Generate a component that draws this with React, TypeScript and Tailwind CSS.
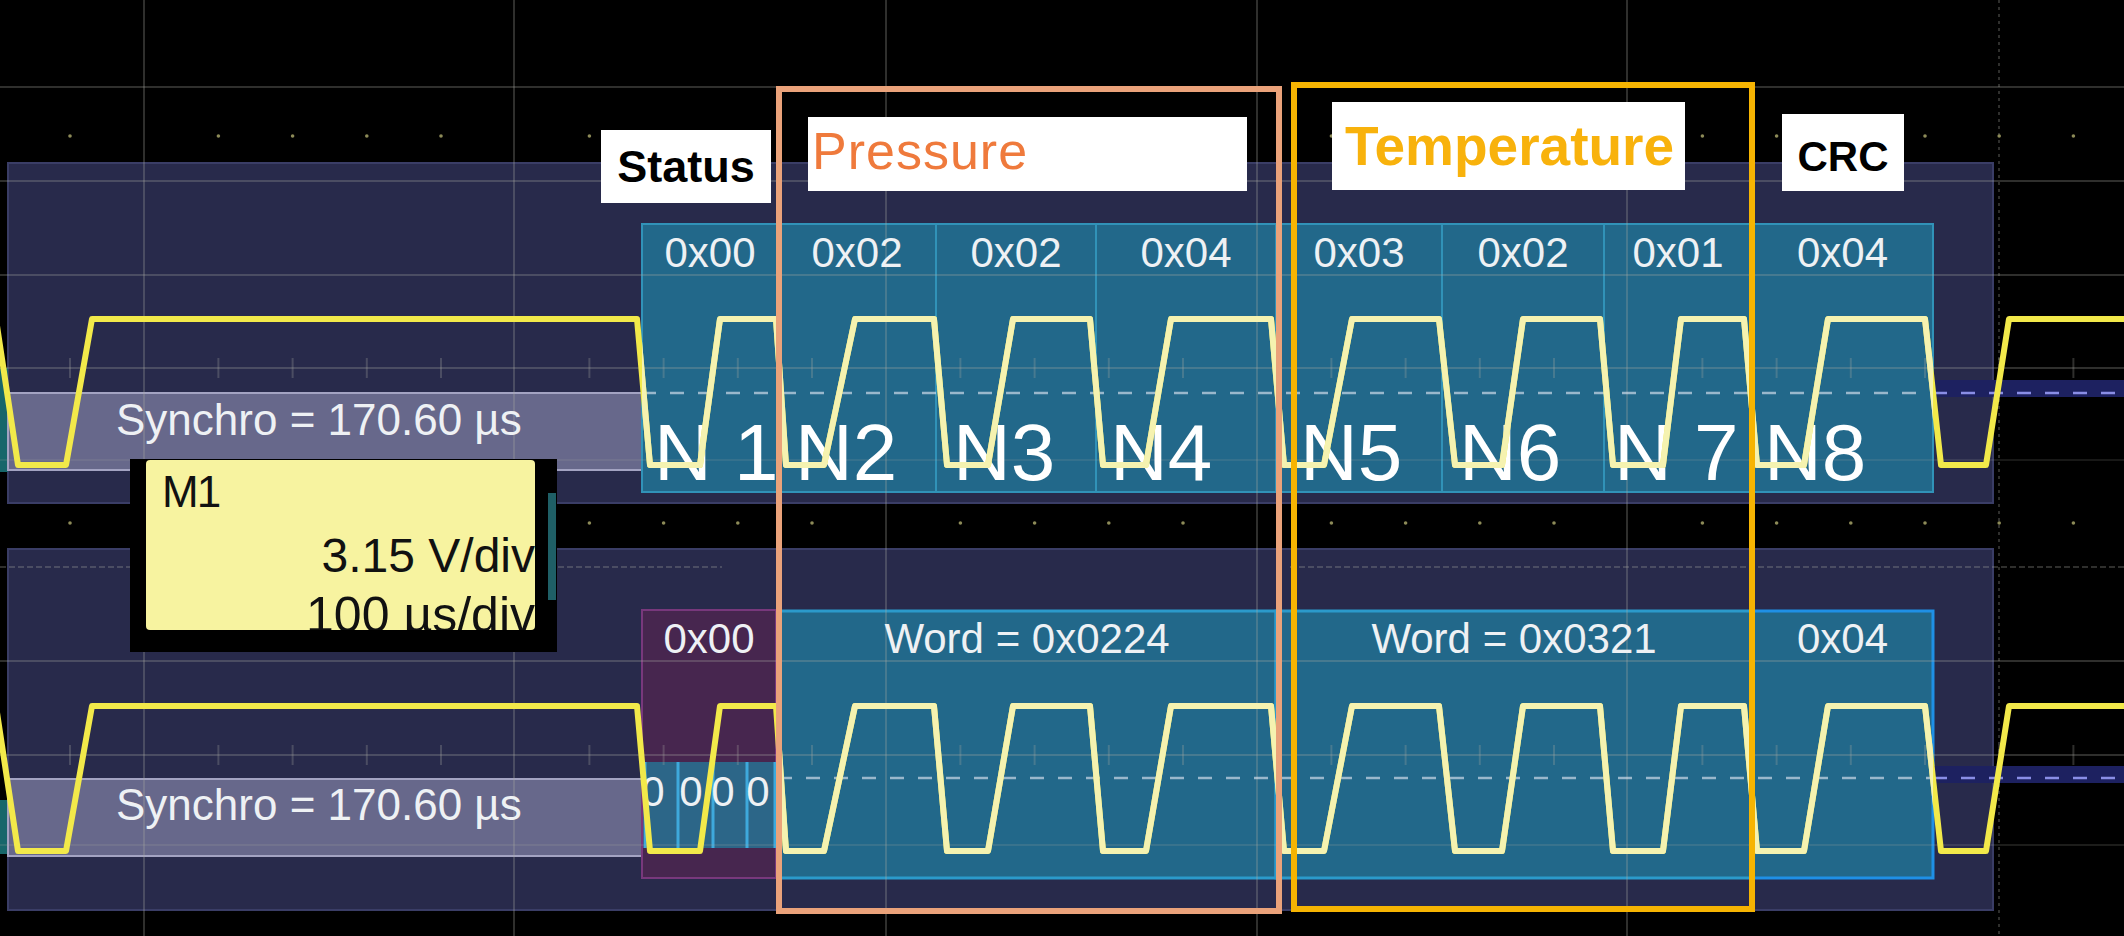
const FONT = "'Liberation Sans', Arial, sans-serif";

// signal levels for the two traces
const HI_T = 319;
const LO_T = 465;
const HI_B = 706;
const LO_B = 851;

// start/end x of every edge, both traces share the timing
const edges: [number, number][] = [
  [-4, 18], [66, 92], [637, 650], [700, 720], [776, 786], [824, 855],
  [934, 947], [988, 1013], [1090, 1103], [1146, 1171], [1271, 1284], [1324, 1352],
  [1439, 1455], [1502, 1523], [1600, 1613], [1663, 1681], [1744, 1757], [1804, 1828],
  [1925, 1941], [1986, 2009],
];

const wavePath = (hi: number, lo: number) => {
  let y = hi;
  let d = `M -8 ${hi}`;
  for (const [a, b] of edges) {
    const next = y === hi ? lo : hi;
    d += ` L ${a} ${y} L ${b} ${next}`;
    y = next;
  }
  return d + ` L 2132 ${y}`;
};

const topCells = [
  { x: 642, w: 136, hex: "0x00", n: "N 1", nx: 654 },
  { x: 778, w: 158, hex: "0x02", n: "N2", nx: 795 },
  { x: 936, w: 160, hex: "0x02", n: "N3", nx: 953 },
  { x: 1096, w: 180, hex: "0x04", n: "N4", nx: 1110 },
  { x: 1276, w: 166, hex: "0x03", n: "N5", nx: 1300 },
  { x: 1442, w: 162, hex: "0x02", n: "N6", nx: 1459 },
  { x: 1604, w: 148, hex: "0x01", n: "N 7", nx: 1614 },
  { x: 1752, w: 181, hex: "0x04", n: "N8", nx: 1764 },
];

const words = [
  { x: 778, w: 498, label: "Word = 0x0224", stroke: "#2b9acb" },
  { x: 1276, w: 476, label: "Word = 0x0321", stroke: "#2b9acb" },
  { x: 1752, w: 181, label: "0x04", stroke: "#1f90e6" },
];

const majorX = [144, 514, 886, 1257, 1627];
const minorX = Array.from({ length: 29 }, (_, i) => 70 + i * 74.2).filter(
  (x) => !majorX.some((m) => Math.abs(m - x) < 6)
);

const GRID = "rgba(170,170,160,0.28)";

function Scope() {
  return (
    <svg width={2124} height={936} viewBox="0 0 2124 936" className="block">
      <defs>
        <clipPath id="decodeTop">
          <rect x={642} y={224} width={1291} height={268} />
        </clipPath>
        <clipPath id="decodeBottom">
          <rect x={778} y={610} width={1155} height={268} />
        </clipPath>
        <clipPath id="smallCells">
          <rect x={645} y={762} width={130} height={86} />
        </clipPath>
      </defs>

      {/* panels */}
      <rect x={8} y={163} width={1985} height={340} fill="#282a4b" stroke="#3a3d66" strokeWidth={2} />
      <rect x={8} y={549} width={1985} height={361} fill="#282a4b" stroke="#3a3d66" strokeWidth={2} />

      {/* teal slivers on the left edge */}
      <rect x={0} y={368} width={8} height={104} fill="#17666a" />
      <rect x={0} y={800} width={8} height={54} fill="#17666a" />

      {/* synchro boxes */}
      <rect x={8} y={393} width={634} height={77} fill="#67688b" stroke="#a3a3c2" strokeWidth={2} />
      <rect x={8} y={779} width={634} height={77} fill="#67688b" stroke="#a3a3c2" strokeWidth={2} />

      {/* top decode cells */}
      {topCells.map((c) => (
        <rect key={c.x} x={c.x} y={224} width={c.w} height={268} fill="#22688a" stroke="#3192b8" strokeWidth={2} />
      ))}

      {/* bottom decode */}
      <rect x={642} y={610} width={134} height={268} fill="#47264f" stroke="#78387c" strokeWidth={2} />
      <rect x={645} y={762} width={130} height={86} fill="#2c6688" />
      {[645, 678, 713, 747, 775].map((x) => (
        <line key={x} x1={x} y1={762} x2={x} y2={848} stroke="#3ea9dc" strokeWidth={3} />
      ))}
      {words.map((w) => (
        <rect key={w.x} x={w.x} y={611} width={w.w} height={267} fill="#22688a" stroke={w.stroke} strokeWidth={3} />
      ))}

      {/* grid */}
      <g stroke={GRID} strokeWidth={2}>
        {majorX.map((x) => (
          <line key={x} x1={x} y1={0} x2={x} y2={936} />
        ))}
        <line x1={1999} y1={0} x2={1999} y2={936} strokeDasharray="3 4" />
        <line x1={0} y1={87} x2={776} y2={87} />
        <line x1={1755} y1={87} x2={2124} y2={87} />
        {[181, 275, 368, 661, 755].map((y) => (
          <line key={y} x1={0} y1={y} x2={2124} y2={y} />
        ))}
        <line x1={0} y1={460} x2={2124} y2={460} strokeOpacity={0.5} />
        <line x1={0} y1={845} x2={2124} y2={845} strokeOpacity={0.6} />
        <line x1={0} y1={567} x2={722} y2={567} strokeDasharray="6 3" />
        <line x1={1290} y1={567} x2={2124} y2={567} strokeDasharray="6 3" />
        {minorX.map((x) => (
          <g key={x}>
            <line x1={x} y1={358} x2={x} y2={378} />
            <line x1={x} y1={745} x2={x} y2={765} />
          </g>
        ))}
      </g>
      {minorX.map((x) => (
        <g key={x} fill="#8d8b58">
          <circle cx={x} cy={136} r={1.8} />
          <circle cx={x} cy={523} r={1.8} />
        </g>
      ))}

      {/* reference level bands and dashed lines */}
      <rect x={1933} y={380} width={191} height={17} fill="#1d2160" />
      <rect x={1933} y={766} width={191} height={17} fill="#1d2160" />
      <g strokeWidth={2.5} strokeDasharray="14 14">
        <line x1={642} y1={393} x2={1933} y2={393} stroke="rgba(220,228,240,0.65)" />
        <line x1={1933} y1={393} x2={2124} y2={393} stroke="#8a8ee6" />
        <line x1={778} y1={778} x2={1933} y2={778} stroke="rgba(220,228,240,0.65)" />
        <line x1={1933} y1={778} x2={2124} y2={778} stroke="#8a8ee6" />
      </g>

      {/* texts */}
      <g fontFamily={FONT} fill="#eef1f4">
        <text x={116} y={435} fontSize={44}>Synchro = 170.60 µs</text>
        <text x={116} y={820} fontSize={44}>Synchro = 170.60 µs</text>
        {topCells.map((c) => (
          <text key={c.x} x={c.x + c.w / 2} y={267} fontSize={42} textAnchor="middle">
            {c.hex}
          </text>
        ))}
        {topCells.map((c) => (
          <text key={c.x} x={c.nx} y={480} fontSize={80} fill="#ffffff">
            {c.n}
          </text>
        ))}
        <text x={709} y={653} fontSize={42} textAnchor="middle">0x00</text>
        {words.map((w) => (
          <text key={w.x} x={w.x + w.w / 2} y={653} fontSize={42} textAnchor="middle">
            {w.label}
          </text>
        ))}
        <g clipPath="url(#smallCells)" fontSize={42}>
          {[653, 691, 723, 758].map((x) => (
            <text key={x} x={x} y={806} textAnchor="middle">0</text>
          ))}
        </g>
      </g>

      {/* waveforms */}
      <g fill="none" strokeWidth={6} strokeLinejoin="round">
        <path d={wavePath(HI_T, LO_T)} stroke="#f2e94a" />
        <path d={wavePath(HI_B, LO_B)} stroke="#f2e94a" />
        <path d={wavePath(HI_T, LO_T)} stroke="#f5f2b0" clipPath="url(#decodeTop)" />
        <path d={wavePath(HI_B, LO_B)} stroke="#f5f2b0" clipPath="url(#decodeBottom)" />
      </g>
    </svg>
  );
}

export default function App() {
  return (
    <div className="relative h-[936px] w-[2124px] overflow-hidden bg-black font-['Liberation_Sans',Arial,sans-serif]">
      <Scope />

      {/* annotations over the scope: field labels and highlight frames */}
      <div className="absolute left-[601px] top-[82px] flex items-start">
        <div className="mt-[48px] flex h-[73px] w-[170px] items-center justify-center bg-white text-[45px] font-bold leading-none text-black">
          Status
        </div>
        <div className="ml-[5px] mt-[4px] h-[828px] w-[506px] border-[6px] border-[#eaa27a] pl-[26px] pt-[25px]">
          <div className="flex h-[74px] w-[439px] items-center bg-white pb-[6px] pl-[4px] text-[52px] leading-none tracking-[1px] text-[#ef7a3c]">
            Pressure
          </div>
        </div>
        <div className="ml-[9px] h-[830px] w-[464px] border-[6px] border-[#f6b402] pl-[35px] pt-[14px]">
          <div className="flex h-[88px] w-[353px] items-center bg-white pl-[13px] text-[55px] font-bold leading-none text-[#f8b20c]">
            Temperature
          </div>
        </div>
        <div className="ml-[27px] mt-[32px] flex h-[77px] w-[122px] items-center justify-center bg-white pt-[8px] text-[42px] font-bold leading-none text-black">
          CRC
        </div>
      </div>

      {/* measurement readout */}
      <div className="absolute left-[130px] top-[459px] flex h-[193px] w-[427px] items-start gap-[13px] bg-black pl-[16px] pt-[1px]">
        <div className="flex h-[170px] w-[389px] shrink-0 flex-col items-end overflow-hidden rounded-[4px] bg-[#f7f3a0] pl-[16px] pt-[10px] text-[#111]">
          <div className="self-start text-[44px] leading-none tracking-[-2px]">M1</div>
          <div className="mt-[18px] whitespace-nowrap text-[48px] leading-none">3.15 V/div</div>
          <div className="mt-[10px] shrink-0 whitespace-nowrap text-[50px] leading-none">100 µs/div</div>
        </div>
        <div className="mt-[33px] h-[107px] w-[8px] bg-[#1f5f66]" />
      </div>
    </div>
  );
}
